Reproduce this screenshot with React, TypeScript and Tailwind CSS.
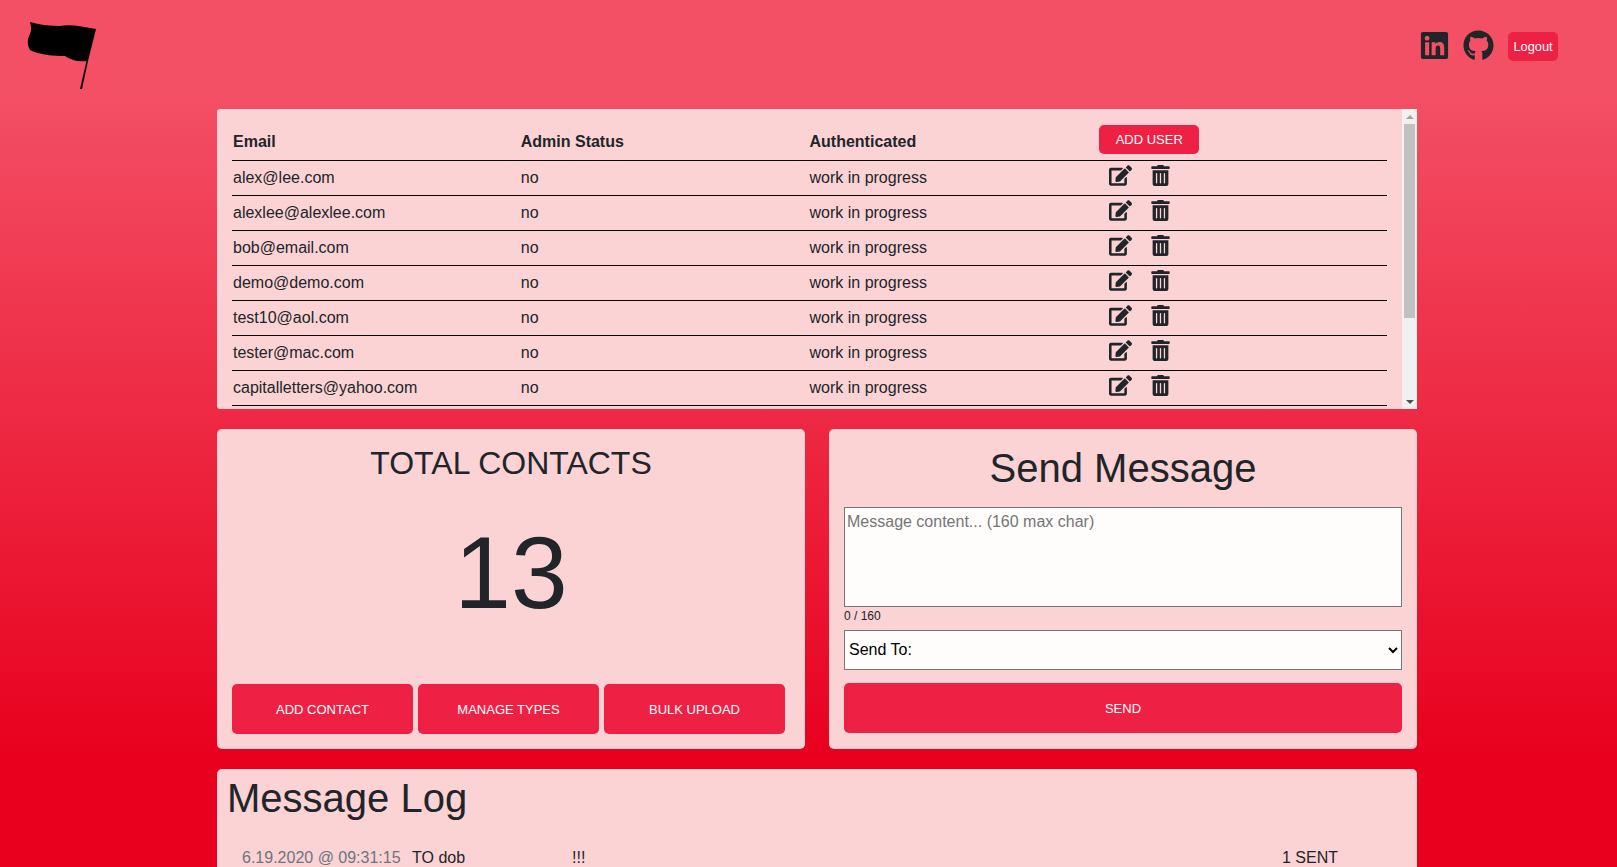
import { FaEdit, FaGithub, FaLinkedin, FaTrashAlt } from "react-icons/fa";

const users = [
  "alex@lee.com",
  "alexlee@alexlee.com",
  "bob@email.com",
  "demo@demo.com",
  "test10@aol.com",
  "tester@mac.com",
  "capitalletters@yahoo.com",
  "admin@demo.com",
  "user@demo.com",
];

function Logo() {
  return (
    <svg width="72" height="72" viewBox="0 0 72 72" className="block">
      <path
        d="M3 1 C14 4 24 5 33 5 C44 3 56 6 69 8 L61 40 L55 68 L53 68 L59.500 40 C50 41 44 39 38 35 C28 35 12 34 3 29 C0 24 0 18 3 13 C5 9 4 5 3 1 Z"
        fill="#000"
      />
    </svg>
  );
}

export default function App() {
  return (
    <div className="h-screen overflow-hidden bg-[linear-gradient(#f35066_10%,#e8001e_88%)] font-['Liberation_Sans',sans-serif] text-[#212529]">
      {/* HEADER */}
      <header className="flex h-[109px] items-start justify-between pl-[27px] pr-[59px] pt-[21px]">
        <Logo />
        <div className="flex items-center pt-[10px]">
          <FaLinkedin className="-mt-px text-[31px]" />
          <FaGithub className="-mt-px ml-[13px] text-[31px]" />
          <button className="ml-[14px] h-[29px] w-[50px] rounded-[5px] bg-[#ee2145] pt-px text-[12.8px] text-white">
            Logout
          </button>
        </div>
      </header>

      <main className="ml-[217px] flex w-[1200px] flex-col gap-5">
        {/* USERS */}
        <div className="relative">
          <section className="h-[300px] overflow-y-auto rounded-[3px] bg-[#fbd3d5] p-[15px] pr-[30px]">
            <table className="w-[1155px] table-fixed border-collapse">
              <thead>
                <tr className="h-[36px] border-b border-black text-left">
                  <th className="p-0 pl-px font-bold">Email</th>
                  <th className="p-0 font-bold">Admin Status</th>
                  <th className="p-0 font-bold">Authenticated</th>
                  <th className="p-0 pb-[4px] pl-px">
                    <button className="block h-[29px] w-[100px] rounded-[5px] bg-[#ee2145] text-[13px] font-normal text-white">
                      ADD USER
                    </button>
                  </th>
                </tr>
              </thead>
              <tbody>
                {users.map((email) => (
                  <tr key={email} className="h-[35px] border-b border-black">
                    <td className="p-0 pl-px">{email}</td>
                    <td className="p-0">no</td>
                    <td className="p-0">work in progress</td>
                    <td className="p-0">
                      <div className="flex items-center gap-[18px] pb-[4px] pl-[11px]">
                        <FaEdit className="text-[23px]" />
                        <FaTrashAlt className="text-[21px]" />
                      </div>
                    </td>
                  </tr>
                ))}
              </tbody>
            </table>
          </section>
          {/* scrollbar, the browser hides the native one */}
          <div className="pointer-events-none absolute inset-y-0 right-0 flex w-[15px] flex-col bg-[#f1f1f1]">
            <div className="flex h-[15px] items-center justify-center">
              <div className="h-0 w-0 border-x-[4px] border-b-[4px] border-x-transparent border-b-[#a3a3a3]" />
            </div>
            <div className="mx-[2px] h-[194px] bg-[#c1c1c1]" />
            <div className="mt-auto flex h-[15px] items-center justify-center">
              <div className="h-0 w-0 border-x-[4px] border-t-[4px] border-x-transparent border-t-[#505050]" />
            </div>
          </div>
        </div>

        <div className="grid grid-cols-2 gap-6">
          {/* CONTACTS */}
          <section className="flex h-[320px] flex-col rounded-[5px] bg-[#fbd3d5] p-[15px]">
            <h3 className="text-center text-[32px] leading-[38px]">TOTAL CONTACTS</h3>
            <div className="mt-[34px] text-center text-[102px] leading-[115px]">13</div>
            <div className="mt-auto flex gap-[5px] pr-[5px]">
              <button className="h-[50px] w-[181px] rounded-[5px] bg-[#ee2145] pt-px text-[13px] text-white">
                ADD CONTACT
              </button>
              <button className="h-[50px] w-[181px] rounded-[5px] bg-[#ee2145] pt-px text-[13px] text-white">
                MANAGE TYPES
              </button>
              <button className="h-[50px] w-[181px] rounded-[5px] bg-[#ee2145] pt-px text-[13px] text-white">
                BULK UPLOAD
              </button>
            </div>
          </section>

          {/* SEND MESSAGE */}
          <section className="flex h-[320px] flex-col rounded-[5px] bg-[#fbd3d5] p-[15px]">
            <h1 className="text-center text-[40px] leading-[48px]">Send Message</h1>
            <textarea
              placeholder="Message content... (160 max char)"
              className="mt-[15px] h-[100px] w-full resize-none border border-[#767676] bg-[#fffdfc] px-[2px] pt-[2px] text-[16px] placeholder:text-[#757575]"
            />
            <div className="mt-[2px] text-[12px] leading-[14px]">0 / 160</div>
            <select className="mt-[7px] h-[40px] w-full appearance-auto rounded-none border border-[#767676] bg-[#fffdfc] pb-[2px] text-[16px] text-black">
              <option>Send To:</option>
            </select>
            <button className="mt-[13px] h-[50px] w-full rounded-[5px] bg-[#ee2145] pt-px text-[13px] text-white">
              SEND
            </button>
          </section>
        </div>

        {/* MESSAGE LOG */}
        <section className="rounded-[5px] bg-[#fbd3d5] px-[10px] pb-[15px]">
          <h1 className="text-[40px] leading-[58px]">Message Log</h1>
          <div className="mt-[19px] flex pl-[15px]">
            <span className="w-[170px] text-[#6c757d]">6.19.2020 @ 09:31:15</span>
            <span className="w-[160px]">TO dob</span>
            <span className="w-[710px]">!!!</span>
            <span>1 SENT</span>
          </div>
        </section>
      </main>
    </div>
  );
}
